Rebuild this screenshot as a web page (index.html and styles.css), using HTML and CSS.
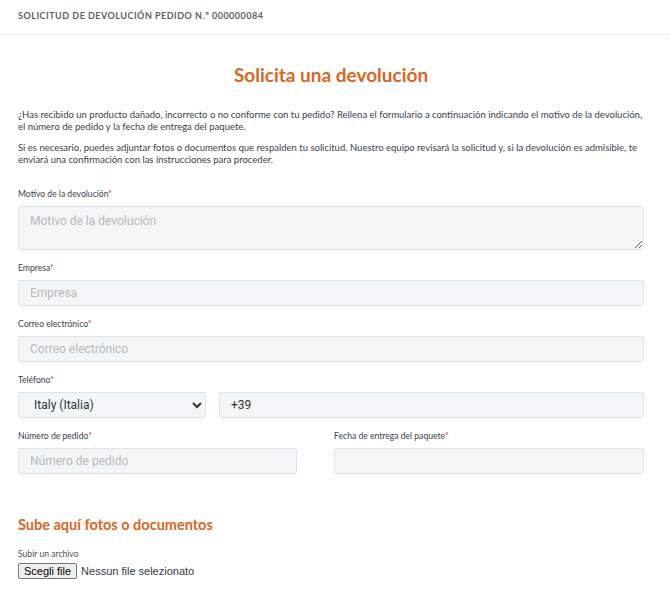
FILE: index.html
```html
<!DOCTYPE html>
<html lang="es">
<head>
  <meta charset="UTF-8" />
  <meta name="viewport" content="width=device-width, initial-scale=1.0"/>
  <title>Solicitud de devolución</title>
  <link rel="stylesheet" href="styles.css">
</head>
<body>

<div class="top-bar">Solicitud de devolución pedido N.º 000000084</div>

<form class="return-form">
  <h1 class="title">Solicita una devolución</h1>

  <p class="intro">¿Has recibido un producto dañado, incorrecto o no conforme con tu pedido? Rellena el formulario a continuación indicando el motivo de la devolución, el número de pedido y la fecha de entrega del paquete.</p>
  <p class="intro last">Si es necesario, puedes adjuntar fotos o documentos que respalden tu solicitud. Nuestro equipo revisará la solicitud y, si la devolución es admisible, te enviará una confirmación con las instrucciones para proceder.</p>

  <div class="field">
    <label>Motivo de la devolución<span class="req">*</span></label>
    <textarea placeholder="Motivo de la devolución"></textarea>
  </div>

  <div class="field">
    <label>Empresa<span class="req">*</span></label>
    <input type="text" placeholder="Empresa">
  </div>

  <div class="field">
    <label>Correo electrónico<span class="req">*</span></label>
    <input type="email" placeholder="Correo electrónico">
  </div>

  <div class="field">
    <label>Teléfono<span class="req">*</span></label>
    <div class="phone-row">
      <select>
        <option>Italy (Italia)</option>
      </select>
      <input type="text" value="+39">
    </div>
  </div>

  <div class="two-col">
    <div class="field">
      <label>Número de pedido<span class="req">*</span></label>
      <input type="text" placeholder="Número de pedido">
    </div>
    <div class="field">
      <label>Fecha de entrega del paquete<span class="req">*</span></label>
      <input type="text">
    </div>
  </div>

  <h2 class="subtitle">Sube aquí fotos o documentos</h2>
  <div class="upload">
    <label class="small">Subir un archivo</label>
    <div class="file-row">
      <button type="button" class="file-btn">Scegli file</button>
      <span class="file-name">Nessun file selezionato</span>
    </div>
  </div>
</form>

</body>
</html>
```

FILE: styles.css
```css
body { margin: 0; font-family: Lato, "Noto Sans", sans-serif; color: #2f3338; background: #fff; }
.top-bar { height: 35px; box-sizing: border-box; padding: 10px 18px 0; border-bottom: 1px solid #ececec; font-size: 9px; line-height: 12px; font-weight: 700; letter-spacing: 0.5px; text-transform: uppercase; color: #5a5f66; }
.return-form { padding: 28px 26px 0 18px; }
.title { margin: 0 0 22px; text-align: center; font-size: 19px; line-height: 24px; font-weight: 700; color: #d8661f; }
.intro { margin: 0 0 9px; font-size: 9.5px; line-height: 12px; color: #383e4c; }
.intro.last { margin-bottom: 22px; }
.field { margin-bottom: 12px; }
label { display: block; margin-bottom: 6px; font-size: 8.6px; line-height: 12px; color: #383e4c; }
.req { color: #d0342c; }
input, select, textarea { display: block; width: 100%; box-sizing: border-box; height: 26px; padding: 0 11px; border: 1px solid #dbe1e8; border-radius: 3px; background: #f3f6f9; font-family: Roboto, "Liberation Sans", sans-serif; font-size: 12px; color: #333; outline: none; }
textarea { height: 44px; padding: 7px 11px; resize: vertical; }
::placeholder { color: #b4b9be; }
.phone-row { display: flex; gap: 13px; }
.phone-row select { width: 188px; flex: none; }
.phone-row input { flex: 1; }
.two-col { display: grid; grid-template-columns: 279px 1fr; gap: 37px; }
.subtitle { margin: 30px 0 14px; font-size: 14.5px; line-height: 18px; font-weight: 700; color: #d8661f; }
.small { margin-bottom: 3px; color: #4a5060; }
.file-row { display: flex; align-items: center; gap: 4px; font-family: "Liberation Sans", Arial, sans-serif; font-size: 11px; }
.file-btn { font-family: "Liberation Sans", Arial, sans-serif; font-size: 11px; line-height: 12px; padding: 1px 5px; border: 1px solid #767676; border-radius: 2px; background: #efefef; color: #000; }
.file-name { color: #333845; }
```
